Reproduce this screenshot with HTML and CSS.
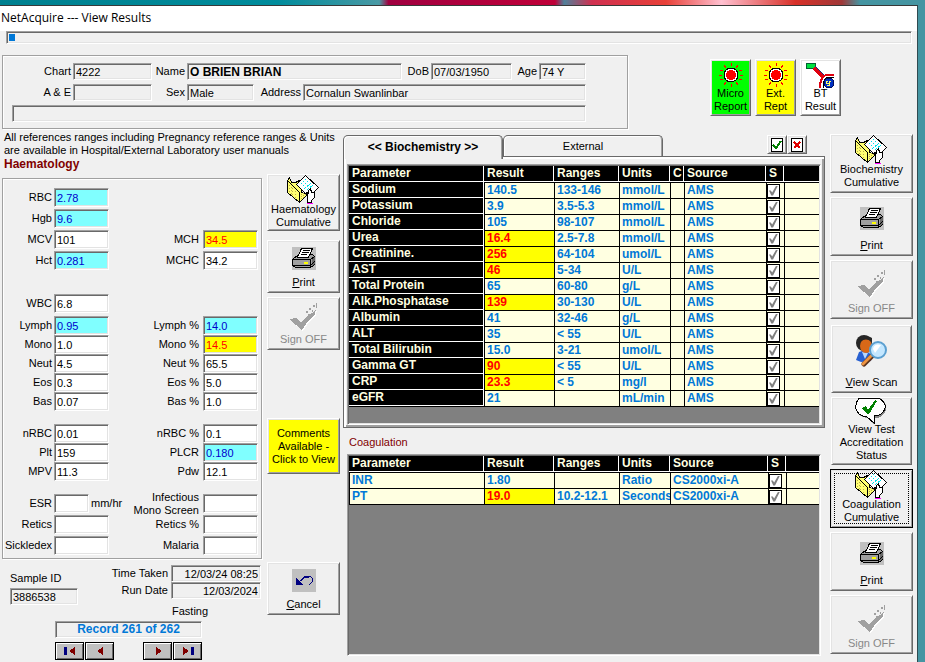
FILE: index.html
```html
<!DOCTYPE html>
<html lang="en">
<head>
<meta charset="utf-8">
<title>NetAcquire --- View Results</title>
<link rel="stylesheet" href="styles.css">
</head>
<body>
<svg class="sprites">
  <symbol id="folder" viewBox="0 0 33 30">
    <g transform="translate(.5 .5)">
    <path d="M0 5 2 2 4 7 8 7 12 5 14 9 14 17 20 19 12 27 0 17Z" fill="#ffff70" stroke="#000"/>
    <path d="M0 5 8 13 12 17V27" fill="none" stroke="#000"/>
    <path d="M2 10 10 18M2 13 10 21M2 16 10 24M14 18V24M16 17V22M18 18V20" stroke="#b8a850" stroke-dasharray="1 1"/>
    <path d="M9 9 18 0 31 12 24 19 17 17Z" fill="#fff"/>
    <path d="M9 9 18 0 31 12 25 18" fill="none" stroke="#000"/>
    <path d="M9 9 18 18" fill="none" stroke="#000"/>
    <path d="M13 9 18 4M15 11 21 5M17 13 24 7M20 14 26 9" stroke="#00dfe8" stroke-dasharray="2 1"/>
    <path d="M20 27V21L19 17 21 18V15L23 13 24 17 27 17V22L24 25V27Z" fill="#fff" stroke="#000"/>
    <path d="M19 28H25" stroke="#f0f"/>
    </g>
  </symbol>
  <symbol id="printer" viewBox="0 0 24 23">
    <path d="M0 0H24V23H0Z" fill="#c0c0c0"/>
    <g transform="translate(.5 .5)">
    <path d="M0 12 6 7H20L22 9V17L18 20H3L0 18Z" fill="#a0a0a0" stroke="#000"/>
    <path d="M19 12 22 9V16L19 19Z" fill="#686868"/>
    <path d="M5 10 9 1H20L16 10Z" fill="#fff" stroke="#000"/>
    <path d="M10 3H17M9 5H16M8 7H14" stroke="#000"/>
    <path d="M0 12H18L22 9M18 12V20M0 18H18L22 14" fill="none" stroke="#000"/>
    <path d="M11 15H15" stroke="#ff0" stroke-width="2"/>
    </g>
  </symbol>
  <symbol id="signoff" viewBox="0 0 30 28">
    <path d="M1 17 8 16 13 21 24 11 28 7 27 12 20 19 14 28Z" fill="#fff"/>
    <path d="M0 16 7 15 12 20 18 13 25 9 27 6 26 11 19 18 13 27Z" fill="#a0a0a0"/>
    <path d="M17 8H19V10H17ZM20 5H22V7H20ZM23 7H24V9H23ZM24 2H26V4H24ZM27 0H28V5H27ZM19 11H21V13H19Z" fill="#a0a0a0"/>
  </symbol>
  <symbol id="scan" viewBox="0 0 32 32">
    <path d="M0 25 3 17 9 15 16 20 15 26 5 27Z" fill="#2860d0"/>
    <path d="M6 17 9 24 12 18Z" fill="#b8d8ff"/>
    <ellipse cx="8" cy="8" rx="8" ry="8" fill="#262626"/>
    <ellipse cx="10" cy="11" rx="6" ry="7" fill="#d96818"/>
    <path d="M3 8C6 4 13 3 16 8V3C12 0 4 0 2 5Z" fill="#262626"/>
    <path d="M16 21 8 29" stroke="#5b321d" stroke-width="5" stroke-linecap="round"/>
    <path d="M15 21 7 29" stroke="#ee9442" stroke-width="3" stroke-linecap="round"/>
    <circle cx="22" cy="15" r="8" fill="#c4e7ff" stroke="#5b9fd0" stroke-width="2"/>
    <path d="M17 14C18 9 22 9 25 10L19 18Z" fill="#fff"/>
  </symbol>
  <symbol id="balloon" viewBox="0 0 33 27">
    <path d="M5 0H25Q36 8 28 17Q25 20 20 20L19 27 14 20Q6 20 3 15Z" fill="#888"/>
    <path d="M4 0H24Q35 8 27 15Q24 18 19 18L19 25 12 19Q3 18 1 11Q0 5 4 0Z" fill="#fff" stroke="#000"/>
    <path d="M7 10 11 8 13 12 20 2 22 3 14 16H12Z" fill="#008000"/>
  </symbol>
  <symbol id="undo" viewBox="0 0 24 23">
    <path d="M0 0H24V23H0Z" fill="#c0c0c0"/>
    <path d="M8 12 12 8 14 7H18L20 9V13L17 16" fill="none" stroke="#000080"/>
    <path d="M9 12 12 9 14 8H17" fill="none" stroke="#000080"/>
    <path d="M4 8 11 16H4Z" fill="#000080"/>
  </symbol>
  <symbol id="lamp" viewBox="0 0 24 24">
    <path d="M12 0V3M12 21V24M0 12H3M21 12H24M5 2 7 5M19 2 17 5M5 22 7 19M19 22 17 19M1 7 4 8M23 7 20 8M1 17 4 16M23 17 20 16" stroke="#f00"/>
    <circle cx="12" cy="12" r="7" fill="#fff" stroke="#000"/>
    <circle cx="12" cy="12" r="5" fill="#f00"/>
  </symbol>
  <symbol id="blood" viewBox="0 0 30 26">
    <path d="M0 0H9V5H0Z" fill="#00e040" stroke="#006030"/>
    <path d="M9 4 18 13" stroke="#203080" stroke-width="2"/>
    <path d="M8 5 17 14" fill="none" stroke="#e00010" stroke-width="3"/>
    <path d="M28 12H20Q14 14 14 25" fill="none" stroke="#e00010" stroke-width="2"/>
    <path d="M28 14H21Q17 16 17 25" fill="none" stroke="#000"/>
    <circle cx="23" cy="20" r="5" fill="#0030c0" stroke="#001060"/>
    <path d="M22 18H20V20H23M25 18H23V22H21" fill="none" stroke="#ff6"/>
  </symbol>
  <symbol id="yes" viewBox="0 0 12 14"><path d="M0 0H12V14H0Z" fill="#fff" stroke="#000" stroke-width="2"/><path d="M2 7 5 10 10 3" fill="none" stroke="#008000" stroke-width="2"/></symbol>
  <symbol id="no" viewBox="0 0 12 14"><path d="M0 0H12V14H0Z" fill="#fff" stroke="#000" stroke-width="2"/><path d="M3 4 9 10M9 4 3 10" stroke="#e00000" stroke-width="2"/></symbol>
  <symbol id="first" viewBox="0 0 14 10"><path d="M1 1H4V9H1Z" fill="#000080"/><path d="M12 1V9L6 5Z" fill="#800000"/></symbol>
  <symbol id="prev" viewBox="0 0 14 10"><path d="M10 1V9L4 5Z" fill="#800000"/></symbol>
  <symbol id="next" viewBox="0 0 14 10"><path d="M5 1V9L11 5Z" fill="#800000"/></symbol>
  <symbol id="last" viewBox="0 0 14 10"><path d="M2 1V9L8 5Z" fill="#800000"/><path d="M10 1H13V9H10Z" fill="#000080"/></symbol>
</svg>
<div class="desktop">
<main class="window">
  <header class="titlebar">NetAcquire --- View Results</header>
  <div class="progress"><span></span></div>

  <section class="top">
    <div class="frame patient">
      <div class="prow">
        <label class="w-first" for="chart">Chart</label><input id="chart" class="f-chart" value="4222" readonly>
        <label class="w-name" for="name">Name</label><input id="name" class="f-grow strong" value="O BRIEN BRIAN" readonly>
        <label class="w-dob" for="dob">DoB</label><input id="dob" class="f-dob" value="07/03/1950" readonly>
        <label class="w-age" for="age">Age</label><input id="age" class="f-age" value="74 Y" readonly>
      </div>
      <div class="prow">
        <label class="w-first" for="ae">A &amp; E</label><input id="ae" class="f-chart" readonly>
        <label class="w-name" for="sex">Sex</label><input id="sex" class="f-sex" value="Male" readonly>
        <label class="w-addr" for="addr">Address</label><input id="addr" class="f-grow" value="Cornalun Swanlinbar" readonly>
      </div>
      <div class="prow"><input class="f-grow" aria-label="Details" readonly></div>
    </div>
    <div class="quick">
      <button class="btn green"><svg width="24" height="24"><use href="#lamp"/></svg>Micro<br>Report</button>
      <button class="btn yellow"><svg width="24" height="24"><use href="#lamp"/></svg>Ext.<br>Rept</button>
      <button class="btn white"><svg width="30" height="26"><use href="#blood"/></svg>BT<br>Result</button>
    </div>
  </section>

  <section class="main">
    <div class="left">
      <p class="note">All references ranges including Pregnancy reference ranges &amp; Units<br>are available in Hospital/External Laboratory user manuals</p>
      <h2>Haematology</h2>
      <div class="split">
        <div class="haem">
          <div class="frame values">
            <div class="group roomy">
              <label for="rbc">RBC</label><input id="rbc" class="low" value="2.78"><span></span><span></span>
              <label for="hgb">Hgb</label><input id="hgb" class="low" value="9.6"><span></span><span></span>
              <label for="mcv">MCV</label><input id="mcv" value="101"><label for="mch">MCH</label><input id="mch" class="high" value="34.5">
              <label for="hct">Hct</label><input id="hct" class="low" value="0.281"><label for="mchc">MCHC</label><input id="mchc" value="34.2">
            </div>
            <div class="group wbc">
              <label for="wbc">WBC</label><input id="wbc" value="6.8"><span></span><span></span>
            </div>
            <div class="group diff">
              <label for="lym">Lymph</label><input id="lym" class="low" value="0.95"><label for="lymp">Lymph %</label><input id="lymp" class="low" value="14.0">
              <label for="mon">Mono</label><input id="mon" value="1.0"><label for="monp">Mono %</label><input id="monp" class="high" value="14.5">
              <label for="neu">Neut</label><input id="neu" value="4.5"><label for="neup">Neut %</label><input id="neup" value="65.5">
              <label for="eos">Eos</label><input id="eos" value="0.3"><label for="eosp">Eos %</label><input id="eosp" value="5.0">
              <label for="bas">Bas</label><input id="bas" value="0.07"><label for="basp">Bas %</label><input id="basp" value="1.0">
            </div>
            <div class="group plates">
              <label for="nrbc">nRBC</label><input id="nrbc" value="0.01"><label for="nrbcp">nRBC %</label><input id="nrbcp" value="0.1">
              <label for="plt">Plt</label><input id="plt" value="159"><label for="plcr">PLCR</label><input id="plcr" class="low" value="0.180">
              <label for="mpv">MPV</label><input id="mpv" value="11.3"><label for="pdw">Pdw</label><input id="pdw" value="12.1">
            </div>
            <div class="group roomy misc">
              <label for="esr">ESR</label><div class="unit"><input id="esr"><span>mm/hr</span></div><label class="two" for="inf">Infectious<br>Mono Screen</label><input id="inf">
              <label for="ret">Retics</label><input id="ret"><label for="retp">Retics %</label><input id="retp">
              <label for="sic">Sickledex</label><input id="sic"><label for="mal">Malaria</label><input id="mal">
            </div>
          </div>
          <div class="sample">
            <div class="sid"><label for="sid">Sample ID</label><input id="sid" value="3886538" readonly></div>
            <div class="dates">
              <label for="tt">Time Taken</label><input id="tt" value="12/03/24 08:25" readonly>
              <label for="rd">Run Date</label><input id="rd" value="12/03/2024" readonly>
            </div>
          </div>
          <div class="fasting">Fasting</div>
          <div class="record">Record 261 of 262</div>
          <nav class="nav">
            <button aria-label="First"><svg width="14" height="10"><use href="#first"/></svg></button>
            <button aria-label="Previous"><svg width="14" height="10"><use href="#prev"/></svg></button>
            <button class="fwd" aria-label="Next"><svg width="14" height="10"><use href="#next"/></svg></button>
            <button aria-label="Last"><svg width="14" height="10"><use href="#last"/></svg></button>
          </nav>
        </div>
        <div class="actions">
          <button class="btn cumul a-cum"><svg width="33" height="30"><use href="#folder"/></svg>Haematology<br>Cumulative</button>
          <button class="btn a-print"><svg width="24" height="23"><use href="#printer"/></svg><span><u>P</u>rint</span></button>
          <button class="btn a-sign" disabled><svg width="30" height="28"><use href="#signoff"/></svg>Sign OFF</button>
          <button class="btn a-comm yellow">Comments<br>Available -<br>Click to View</button>
          <button class="btn a-cancel"><svg width="24" height="23"><use href="#undo"/></svg><span><u>C</u>ancel</span></button>
        </div>
      </div>
    </div>

    <div class="center">
      <div class="tabbar">
        <button class="tab active">&lt;&lt; Biochemistry &gt;&gt;</button>
        <button class="tab">External</button>
        <div class="tools">
          <button class="btn" aria-label="Accept all"><svg width="12" height="14"><use href="#yes"/></svg></button>
          <button class="btn" aria-label="Clear all"><svg width="12" height="14"><use href="#no"/></svg></button>
        </div>
      </div>
      <div class="tabpanel">
        <div class="gridbox bio">
          <table class="fixed">
            <colgroup><col class="c-param"><col class="c-result"><col class="c-range"><col class="c-units"><col class="c-c"><col class="c-source"><col class="c-s"><col></colgroup>
            <thead><tr><th>Parameter</th><th>Result</th><th>Ranges</th><th>Units</th><th>C</th><th>Source</th><th>S</th><th></th></tr></thead>
            <tbody>
            <tr><th>Sodium</th><td>140.5</td><td>133-146</td><td>mmol/L</td><td></td><td>AMS</td><td class="chk"><input type="checkbox" aria-label="Sodium" checked></td><td></td></tr>
            <tr><th>Potassium</th><td>3.9</td><td>3.5-5.3</td><td>mmol/L</td><td></td><td>AMS</td><td class="chk"><input type="checkbox" aria-label="Potassium" checked></td><td></td></tr>
            <tr><th>Chloride</th><td>105</td><td>98-107</td><td>mmol/L</td><td></td><td>AMS</td><td class="chk"><input type="checkbox" aria-label="Chloride" checked></td><td></td></tr>
            <tr><th>Urea</th><td class="flag">16.4</td><td>2.5-7.8</td><td>mmol/L</td><td></td><td>AMS</td><td class="chk"><input type="checkbox" aria-label="Urea" checked></td><td></td></tr>
            <tr><th>Creatinine.</th><td class="flag">256</td><td>64-104</td><td>umol/L</td><td></td><td>AMS</td><td class="chk"><input type="checkbox" aria-label="Creatinine" checked></td><td></td></tr>
            <tr><th>AST</th><td class="flag">46</td><td>5-34</td><td>U/L</td><td></td><td>AMS</td><td class="chk"><input type="checkbox" aria-label="AST" checked></td><td></td></tr>
            <tr><th>Total Protein</th><td>65</td><td>60-80</td><td>g/L</td><td></td><td>AMS</td><td class="chk"><input type="checkbox" aria-label="Total Protein" checked></td><td></td></tr>
            <tr><th>Alk.Phosphatase</th><td class="flag">139</td><td>30-130</td><td>U/L</td><td></td><td>AMS</td><td class="chk"><input type="checkbox" aria-label="Alk.Phosphatase" checked></td><td></td></tr>
            <tr><th>Albumin</th><td>41</td><td>32-46</td><td>g/L</td><td></td><td>AMS</td><td class="chk"><input type="checkbox" aria-label="Albumin" checked></td><td></td></tr>
            <tr><th>ALT</th><td>35</td><td>&lt; 55</td><td>U/L</td><td></td><td>AMS</td><td class="chk"><input type="checkbox" aria-label="ALT" checked></td><td></td></tr>
            <tr><th>Total Bilirubin</th><td>15.0</td><td>3-21</td><td>umol/L</td><td></td><td>AMS</td><td class="chk"><input type="checkbox" aria-label="Total Bilirubin" checked></td><td></td></tr>
            <tr><th>Gamma GT</th><td class="flag">90</td><td>&lt; 55</td><td>U/L</td><td></td><td>AMS</td><td class="chk"><input type="checkbox" aria-label="Gamma GT" checked></td><td></td></tr>
            <tr><th>CRP</th><td class="flag">23.3</td><td>&lt; 5</td><td>mg/l</td><td></td><td>AMS</td><td class="chk"><input type="checkbox" aria-label="CRP" checked></td><td></td></tr>
            <tr><th>eGFR</th><td>21</td><td></td><td>mL/min</td><td></td><td>AMS</td><td class="chk"><input type="checkbox" aria-label="eGFR" checked></td><td></td></tr>
            </tbody>
          </table>
        </div>
      </div>
      <h3>Coagulation</h3>
      <div class="gridbox coag">
        <table>
          <colgroup><col class="c-param"><col class="c-result"><col class="c-range"><col class="c-units"><col class="c-wide"><col class="c-s"><col></colgroup>
          <thead><tr><th>Parameter</th><th>Result</th><th>Ranges</th><th>Units</th><th>Source</th><th>S</th><th></th></tr></thead>
          <tbody>
          <tr><td>INR</td><td>1.80</td><td></td><td>Ratio</td><td>CS2000xi-A</td><td class="chk"><input type="checkbox" aria-label="INR" checked></td><td></td></tr>
          <tr><td>PT</td><td class="flag">19.0</td><td>10.2-12.1</td><td>Seconds</td><td>CS2000xi-A</td><td class="chk"><input type="checkbox" aria-label="PT" checked></td><td></td></tr>
          </tbody>
        </table>
      </div>
    </div>

    <div class="right">
      <button class="btn cumul"><svg width="33" height="30"><use href="#folder"/></svg>Biochemistry<br>Cumulative</button>
      <button class="btn icon"><svg width="24" height="23"><use href="#printer"/></svg><span><u>P</u>rint</span></button>
      <button class="btn icon" disabled><svg width="30" height="28"><use href="#signoff"/></svg>Sign OFF</button>
      <button class="btn tall icon first"><svg class="smooth" width="32" height="32"><use href="#scan"/></svg><span><u>V</u>iew Scan</span></button>
      <button class="btn tall cumul"><svg width="33" height="27"><use href="#balloon"/></svg>View Test<br>Accreditation<br>Status</button>
      <button class="btn cumul focus"><svg width="33" height="30"><use href="#folder"/></svg>Coagulation<br>Cumulative</button>
      <button class="btn icon"><svg width="24" height="23"><use href="#printer"/></svg><span><u>P</u>rint</span></button>
      <button class="btn icon" disabled><svg width="30" height="28"><use href="#signoff"/></svg>Sign OFF</button>
    </div>
  </section>
</main>
</div>
</body>
</html>
```
FILE: styles.css
```css
* { box-sizing: border-box; }

body {
  margin: 0;
  font: 11px/13px "Liberation Sans", Arial, sans-serif;
  color: #000;
}

.sprites { display: none; }
svg { display: block; flex: none; shape-rendering: crispEdges; }
svg.smooth { shape-rendering: auto; }
h2, h3, p { margin: 0; }
button, input { font: inherit; color: inherit; margin: 0; }

.desktop {
  min-height: 100vh;
  padding: 5px 7px 0 0;
  display: flex;
  background: linear-gradient(90deg, #00808f 0, #008c9c 30%, #4a9aa5 41%, #a00040 42%, #c00038 60%, #50809a 61%, #d03050 64%, #e84038 72%, #ffc0d0 78%, #d83028 86%, #a03838 91%, #4595a2 93%);
}

.window {
  flex: 1;
  min-width: 0;
  display: flex;
  flex-direction: column;
  background: #f0f0f0;
  border-top: 1px solid #383838;
  border-right: 1px solid #304a50;
}

.titlebar {
  height: 25px;
  padding-left: 1px;
  background: #fff;
  font: 12px/24px "Open Sans", "Noto Sans", sans-serif;
}

/* Sunken edges */
.progress, input, .record, .gridbox {
  border: 1px solid;
  border-color: #a0a0a0 #fff #fff #a0a0a0;
  box-shadow: inset 1px 1px #696969, inset -1px -1px #e3e3e3;
}

.progress { height: 13px; margin: 0 5px 0 6px; padding: 2px; }
.progress span { display: block; width: 6px; height: 7px; background: #0078d7; }

.frame {
  border: 1px solid #a0a0a0;
  box-shadow: 1px 1px #fff, inset 1px 1px #fff;
}

input {
  min-width: 0;
  padding: 0 2px;
  border-radius: 0;
  background: #fff;
  outline: 0;
}
input[readonly] { background: #f0f0f0; }

/* Raised buttons */
.btn {
  display: flex;
  flex-direction: column;
  align-items: center;
  padding: 0;
  border: 1px solid;
  border-color: #fff #696969 #696969 #fff;
  border-radius: 0;
  box-shadow: inset 1px 1px #e3e3e3, inset -1px -1px #a0a0a0;
  background: #f0f0f0;
  line-height: 13px;
  text-align: center;
  white-space: nowrap;
}
.btn:disabled { color: #888; }
.yellow { background: #ff0; }
.green { background: #0f0; }
.white { background: #fff; }

.top { display: flex; align-items: flex-start; padding: 11px 76px 0 2px; }
.patient {
  flex: 1;
  display: flex;
  flex-direction: column;
  gap: 4px;
  margin-right: 82px;
  padding: 7px 41px 6px 9px;
}
.prow { display: flex; align-items: center; }
.prow label { flex: none; padding-right: 2px; text-align: right; }
.prow input { flex: none; height: 17px; }
.prow .f-grow { flex: 1; }
.w-first { width: 61px; }
.w-name { width: 35px; }
.w-dob { width: 29px; }
.w-age { width: 27px; }
.w-addr { width: 49px; }
.f-chart { width: 79px; }
.f-dob { width: 81px; }
.f-age { width: 47px; }
.f-sex { width: 67px; }
.strong { font-size: 12px; font-weight: bold; }

.quick { display: flex; gap: 4px; padding-top: 4px; }
.quick .btn { display: flex; width: 41px; height: 57px; }
.quick .btn { display: block; }
.quick svg { margin: 0 auto; }
.quick .white svg { margin: 0 auto -2px; }

.main {
  flex: 1;
  display: grid;
  grid-template-columns: 343px minmax(0, 1fr) 83px;
  padding: 2px 4px 0 0;
}

.note { padding-left: 4px; white-space: nowrap; }
.left h2 { padding-left: 4px; font-size: 12px; line-height: 14px; color: #800000; }

.split { display: flex; gap: 5px; }
.haem { width: 262px; padding-left: 2px; }
.values { margin-top: 7px; padding: 9px 3px 3px 0; }
.group {
  display: grid;
  grid-template-columns: 51px 55px 94px 55px;
  grid-auto-rows: 19px;
  align-items: center;
}
.group label { text-align: right; padding-right: 2px; white-space: nowrap; }
.group > input { width: 55px; height: 19px; }
.group > label:nth-child(4n + 3) { padding-right: 4px; }
.roomy { row-gap: 2px; }
.wbc { margin-top: 24px; }
.diff { margin-top: 3px; }
.plates { margin-top: 13px; }
.misc { margin-top: 13px; }
.unit { display: flex; align-items: center; gap: 2px; }
.unit input { flex: none; width: 35px; height: 19px; }
.low { background: #80ffff; color: #00c; }
.high { background: #ff0; color: #f00; }

.sample { display: flex; justify-content: space-between; padding: 6px 1px 0 8px; }
.sid { width: 68px; padding-top: 7px; }
.sid label { display: block; margin-bottom: 3px; }
.sid input { width: 100%; height: 17px; }
.dates {
  display: grid;
  grid-template-columns: auto 90px;
  grid-auto-rows: 17px;
  column-gap: 3px;
  align-items: center;
  text-align: right;
}
.dates input { width: 100%; height: 17px; text-align: right; }
.fasting { padding-left: 170px; }
.record {
  width: 147px;
  height: 17px;
  margin: 3px 0 4px 53px;
  font-size: 12px;
  font-weight: bold;
  line-height: 15px;
  text-align: center;
  color: #0078d7;
}
.nav { display: flex; gap: 1px; padding: 0 0 2px 53px; }
.nav button {
  width: 29px;
  height: 18px;
  padding: 0;
  display: grid;
  place-items: center;
  border: 1px solid #000;
  border-radius: 0;
  background: #c0c0c0;
  box-shadow: inset 1px 1px #fff, inset -1px -1px #696969;
}
.nav .fwd { margin-left: 28px; }

.actions { width: 73px; padding-top: 3px; }
.actions .btn { width: 100%; height: 53px; }
.actions .a-cum { height: 57px; margin-bottom: 9px; }
.actions .a-print { margin-bottom: 4px; justify-content: space-between; padding: 6px 0 3px; }
.actions .a-sign { margin-bottom: 68px; justify-content: space-between; padding: 5px 0 3px; }
.actions .a-comm { height: 56px; margin-bottom: 88px; justify-content: center; }
.actions .a-cancel { justify-content: space-between; padding: 6px 0 3px; }
.cumul svg { margin-bottom: -2px; }

.center { display: flex; flex-direction: column; padding: 4px 5px 6px 0; }
.tabbar { display: flex; align-items: flex-start; padding-right: 18px; }
.tab {
  width: 160px;
  height: 21px;
  padding: 0;
  border: 1px solid #696969;
  border-bottom: 0;
  border-radius: 5px 5px 0 0;
  box-shadow: inset 1px 1px #fff, inset -1px 0 #a0a0a0;
  background: #f0f0f0;
}
.tab.active {
  height: 24px;
  margin-bottom: -3px;
  position: relative;
  font-size: 12px;
  font-weight: bold;
}
.tools { display: flex; margin-left: auto; }
.tools .btn { width: 20px; height: 19px; justify-content: center; }

.tabpanel {
  padding: 7px 3px 2px;
  border: 1px solid #696969;
  box-shadow: inset 2px 2px #fff, inset -2px -2px #a0a0a0;
}
.gridbox { padding: 1px; background: #808080; }
.bio { height: 261px; }
.coag { flex: 1; margin: 0 4px; }

h3 { padding: 8px 0 5px 6px; font-size: 11px; font-weight: normal; line-height: 13px; color: #800000; }

table {
  width: 100%;
  table-layout: fixed;
  border-collapse: separate;
  border-spacing: 0;
  font-size: 12px;
  line-height: 15px;
  font-weight: bold;
  border-bottom: 1px solid #000;
}
.c-param { width: 135px; }
.c-result { width: 70px; }
.c-range { width: 65px; }
.c-units { width: 51px; }
.c-c { width: 14px; }
.c-source { width: 82px; }
.c-wide { width: 98px; }
.c-s { width: 18px; }
th, td {
  height: 16px;
  padding: 0 0 0 3px;
  overflow: hidden;
  text-align: left;
  white-space: nowrap;
}
th {
  background: #000;
  color: #ffffe1;
  border-right: 1px solid #fff;
  border-bottom: 1px solid #fff;
}
thead th:last-child { border-right: 0; }
td {
  padding-left: 2px;
  background: #ffffe1;
  color: #0078d7;
  border-top: 1px solid #000;
  border-left: 1px solid #000;
}
.flag { background: #ff0; color: #f00; }
td.chk { padding: 0; }
.chk input {
  display: block;
  appearance: none;
  width: 13px;
  height: 14px;
  padding: 0;
  border: 1px solid #000;
  box-shadow: none;
}
.chk input:checked::before {
  content: "";
  display: block;
  width: 9px;
  height: 10px;
  margin: 1px;
  background: #808080;
  clip-path: polygon(0 50%, 20% 50%, 35% 70%, 80% 0, 100% 0, 45% 100%, 25% 100%);
}

.right { display: flex; flex-direction: column; gap: 4px; padding-top: 3px; }
.right .btn { height: 59px; flex: none; }
.right .tall { height: 68px; margin: 0 1px; }
.right .first { margin-top: 2px; }
.right .icon { justify-content: space-between; padding: 9px 0 3px; }
.right .focus { border-color: #000; outline: 1px dotted #000; outline-offset: -5px; }
```
